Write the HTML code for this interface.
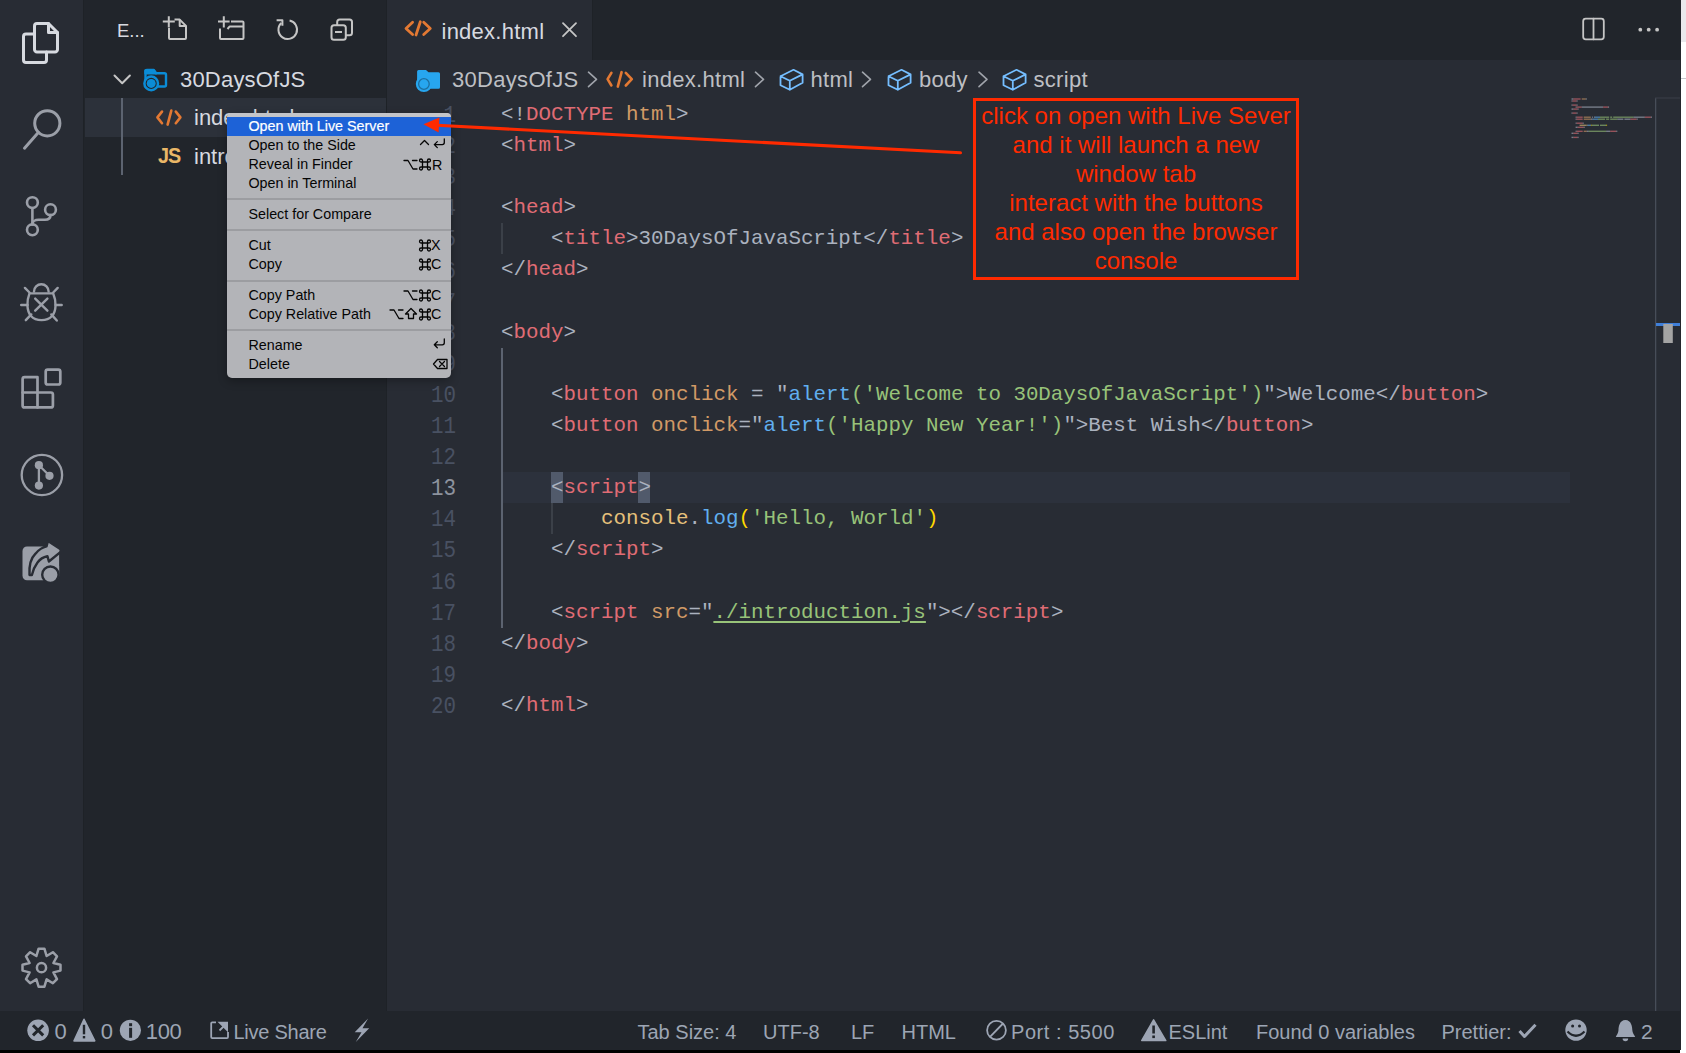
<!DOCTYPE html>
<html><head><meta charset="utf-8">
<style>
*{margin:0;padding:0;box-sizing:border-box}
html,body{width:1686px;height:1053px;overflow:hidden;background:#282c34;font-family:"Liberation Sans",sans-serif}
.a{position:absolute}
#act{left:0;top:0;width:83px;height:1011px;background:#282c34}
#side{left:83px;top:0;width:304px;height:1011px;background:#21252b;border-left:1px solid #1e2227;border-right:1px solid #1e2227}
#tabs{left:387px;top:0;width:1293px;height:60px;background:#21252b}
#tab{left:387px;top:0;width:206px;height:60px;background:#282c34;border-right:1px solid #1e2227}
#editor{left:387px;top:60px;width:1293px;height:951px;background:#282c34}
#status{left:0;top:1011px;width:1680px;height:39px;background:#21252b}
#black{left:0;top:1050px;width:1680px;height:3px;background:#000}
#rstrip{left:1680px;top:0;width:6px;height:1053px;background:#fff}
.code{font-family:"Liberation Mono",monospace;font-size:20.83px;line-height:31.1px;white-space:pre;color:#abb2bf}
.ln{left:400px;width:56px;text-align:right;color:#495162}
.t{color:#e06c75}.o{color:#d19a66}.s{color:#98c379}.f{color:#61afef}.y{color:#e5c07b}.g{color:#ffd700}
.sb{color:#9da5b4;font-size:20px;top:1019.5px;line-height:24px;white-space:pre}
#curline{left:503px;top:472.2px;width:1067px;height:31.1px;background:#2c313c}
.guide{width:2px}
.cur{color:#abb2bf}
.bm{}
.lnn{left:396px;width:60px;text-align:right;transform:scaleY(1.15);transform-origin:50% 68%}
.u{text-decoration:underline;text-decoration-thickness:2px;text-underline-offset:3px}
.sl{white-space:pre;line-height:26px}
.mi{left:248.5px;font-size:14.3px;line-height:20px;white-space:pre}
.sep{left:227px;width:224px;height:2px;background:#9c9da1}
.bc{font-size:22px;color:#bdbfc3;letter-spacing:0.3px}
</style></head><body>
<div id="act" class="a"></div>
<div id="side" class="a"></div>

<svg class="a" style="left:0;top:0" width="84" height="1011" viewBox="0 0 84 1011" fill="none" stroke="#9b9fa8" stroke-width="2.6" stroke-linejoin="round" stroke-linecap="round">
 <g stroke="#d7dae0" stroke-width="3">
  <path d="M34.5 33.5 V26 a2.5 2.5 0 0 1 2.5-2.5 H48.5 L57.5 32.5 V49.5 a2.5 2.5 0 0 1-2.5 2.5 H37 a2.5 2.5 0 0 1-2.5-2.5 Z"/>
  <path d="M48.5 23.5 V32.5 H57.5"/>
  <path d="M34.5 34 H26 a2.5 2.5 0 0 0-2.5 2.5 V60 a2.5 2.5 0 0 0 2.5 2.5 H44 a2.5 2.5 0 0 0 2.5-2.5 V52"/>
 </g>
 <g stroke-width="3">
  <circle cx="47.3" cy="123.3" r="12.6"/>
  <path d="M38.3 132.5 L24.5 148.2"/>
 </g>
 <g stroke-width="2.6">
  <circle cx="32.4" cy="202.6" r="5.4"/>
  <circle cx="50.5" cy="209.7" r="5.4"/>
  <circle cx="32.4" cy="229.8" r="5.4"/>
  <path d="M32.4 208 V224.4"/>
  <path d="M50.5 215.1 C50.5 218.5 48.5 219.8 45 219.8 H38.5 C35 219.8 32.4 221.5 32.4 224"/>
 </g>
 <g stroke-width="2.4">
  <path d="M34 291.5 a7.3 7.3 0 0 1 14.6 0"/>
  <path d="M29.5 293.4 H53.2 C56.5 301 56.5 311 52 316 C47 321.5 36 321.5 31 316 C26.5 311 26.5 301 29.5 293.4 Z"/>
  <path d="M24.9 287.9 L29.5 292.5 M57.7 287.9 L53.2 292.5 M21.2 305 H27.6 M55.6 305 H61.7 M25.8 320.2 L31.3 314.4 M56.8 320.5 L51.3 314.4"/>
  <path d="M35.2 298.6 L47.4 310.7 M47.4 298.6 L35.2 310.7"/>
 </g>
 <g stroke-width="2.7">
  <path d="M24.6 377.2 H37.5 V407.4 H24.6 a2 2 0 0 1-2-2 V379.2 a2 2 0 0 1 2-2 Z"/>
  <path d="M22.6 392.5 H50.9 a2 2 0 0 1 2 2 V405.4 a2 2 0 0 1-2 2 H37.5"/>
  <rect x="45.7" y="369.6" width="14.6" height="14.9" rx="2"/>
 </g>
 <g stroke-width="2.3">
  <circle cx="41.9" cy="475" r="20.2"/>
  <path d="M38.9 465.2 V485.6 M38.9 465.2 L49.5 475.8"/>
 </g>
 <g fill="#9b9fa8" stroke="none">
  <circle cx="38.9" cy="465.2" r="4.1"/><circle cx="49.5" cy="475.8" r="4.1"/><circle cx="38.9" cy="485.6" r="4.1"/>
  <rect x="22.5" y="546.4" width="36.7" height="33.8" rx="4.5"/>
 </g>
 <path fill="#9b9fa8" stroke="#282c34" stroke-width="2.4" d="M29.5 575 C29 567 30 559 35.5 553.7 C39 549.5 42.5 547.3 46.5 546.4 L48 541 L62.5 550.4 L48.9 561.5 L47.4 556.2 C43 557 40 559 37.5 562.5 C34.5 566.5 33 570.5 31.9 575 Z"/>
 <circle cx="50.4" cy="574.7" r="8.2" fill="#9b9fa8" stroke="#282c34" stroke-width="2.4"/>
 <rect x="59.5" y="546" width="4" height="20" fill="#282c34" stroke="none"/>
 <g stroke-width="2.5">
  <path d="M36.4 956.0 L38.6 948.7 L44.4 948.7 L46.6 956.0 L52.9 952.2 L57.0 956.3 L53.4 963.0 L60.5 964.8 L60.5 970.6 L53.4 972.4 L57.0 979.1 L52.9 983.2 L46.6 979.4 L44.4 986.7 L38.6 986.7 L36.4 979.4 L30.1 983.2 L26.0 979.1 L29.6 972.4 L22.5 970.6 L22.5 964.8 L29.6 963.0 L26.0 956.3 L30.1 952.2 Z"/>
  <circle cx="41.5" cy="967.7" r="4.6"/>
 </g>
</svg>

<div class="a" style="left:85px;top:98px;width:301px;height:39px;background:#2c313a"></div>
<div class="a" style="left:121px;top:98px;width:2px;height:77px;background:#5c6370"></div>
<div class="a sl" style="left:117px;top:18px;font-size:18.5px;color:#d7dae0">E...</div>
<svg class="a" style="left:84px;top:0" width="303" height="180" viewBox="84 0 303 180" fill="none" stroke="#c5c5c5" stroke-width="2" stroke-linejoin="round">
 <path d="M162.8 21.6 H174.8 M168.8 16.3 V27.4"/>
 <path d="M174.5 19.6 H179.7 L186 25.9 V38 a1 1 0 0 1-1 1 H170 a1 1 0 0 1-1-1 V28"/>
 <path d="M179.7 19.6 V25.9 H186"/>
 <path d="M218 21.6 H229.6 M223.8 16.3 V27.4"/>
 <path d="M231 21.6 H242.5 a1 1 0 0 1 1 1 V38 a1 1 0 0 1-1 1 H221 a1 1 0 0 1-1-1 V28.5"/>
 <path d="M227.5 29 L229.5 26.6 H243.5"/>
 <path d="M289.6 20.6 A9.3 9.3 0 1 1 281.3 23"/>
 <path d="M276.6 20.2 H282.4 V25.8"/>
 <rect x="337.2" y="19.6" width="14.8" height="15.6" rx="2.5"/>
 <rect x="331.5" y="25.3" width="14.3" height="14.5" rx="2.5" fill="#21252b"/>
 <path d="M335 32 H342"/>
 <path d="M114.5 75.5 L122.2 83.2 L129.9 75.5" stroke-width="2" stroke-linecap="round"/>
 <g stroke="#0b8cd6" stroke-width="2.4">
  <path d="M145.5 80 V71.5 a1.5 1.5 0 0 1 1.5-1.5 H153.8 L156 73.2 H164.5 a1.5 1.5 0 0 1 1.5 1.5 V85 a1.5 1.5 0 0 1-1.5 1.5 H158"/>
  <path d="M145.5 70.5 H153.8 L156 73.2 H145.5 Z" fill="#0b8cd6"/>
  <circle cx="151.2" cy="83.4" r="6.8" stroke-width="2.5"/>
  <circle cx="151.2" cy="83.4" r="4.5" fill="#0b8cd6" stroke="none"/>
 </g>
 <g stroke="#e37933" stroke-width="2.6" stroke-linecap="round">
  <path d="M162 111.6 L157.4 117.4 L162 123.2"/>
  <path d="M171.3 110.6 L167.6 124.6"/>
  <path d="M175.8 111.6 L180.4 117.4 L175.8 123.2"/>
 </g>
</svg>
<div class="a sl" style="left:158px;top:143.3px;font-size:22px;font-weight:700;color:#eab767;letter-spacing:-1px;transform:scaleX(0.9);transform-origin:0 0">JS</div>
<div class="a sl" style="left:180px;top:67px;font-size:22px;color:#d7dae0;letter-spacing:0.2px">30DaysOfJS</div>
<div class="a sl" style="left:194px;top:104.6px;font-size:22px;color:#d7dae0">index.html</div>
<div class="a sl" style="left:194px;top:143.6px;font-size:22px;color:#d7dae0">introduction.js</div>
<div id="tabs" class="a"></div>
<div id="tab" class="a"></div>
<svg class="a" style="left:387px;top:0" width="1293" height="100" viewBox="387 0 1293 100" fill="none" stroke-linejoin="round" stroke-linecap="round">
 <g stroke="#e37933" stroke-width="2.8">
  <path d="M412.6 22.2 L406 28.4 L412.6 34.6"/><path d="M420.3 21.8 L416 35"/><path d="M423.7 22.2 L430.3 28.4 L423.7 34.6"/>
 </g>
 <path d="M563 23.2 L576 36.2 M576 23.2 L563 36.2" stroke="#c5c5c5" stroke-width="1.8"/>
 <rect x="1583.2" y="18.7" width="20.6" height="20.6" rx="2.5" stroke="#c5c5c5" stroke-width="1.8"/>
 <path d="M1593.5 18.7 V39.3" stroke="#c5c5c5" stroke-width="1.8"/>
 <g fill="#c5c5c5" stroke="none"><circle cx="1640.3" cy="29.7" r="1.9"/><circle cx="1648.7" cy="29.7" r="1.9"/><circle cx="1657.1" cy="29.7" r="1.9"/></g>
 <g fill="#27a6ef" stroke="none">
  <path d="M417.1 71.4 a1.5 1.5 0 0 1 1.5-1.5 H426 L428.5 72.3 H438.5 a1.5 1.5 0 0 1 1.5 1.5 V87.3 a1.5 1.5 0 0 1-1.5 1.5 H418.6 a1.5 1.5 0 0 1-1.5-1.5 Z"/>
  <circle cx="423.9" cy="84" r="8.1"/>
 </g>
 <circle cx="423.9" cy="84" r="5.3" stroke="#1d6fa0" stroke-width="1.3"/>
 <g stroke="#a0a4ab" stroke-width="1.6">
  <path d="M588.5 72.2 L596.5 79.4 L588.5 86.6"/>
  <path d="M755.5 72.2 L763.5 79.4 L755.5 86.6"/>
  <path d="M862.5 72.2 L870.5 79.4 L862.5 86.6"/>
  <path d="M979 72.2 L987 79.4 L979 86.6"/>
 </g>
 <g stroke="#e37933" stroke-width="2.6">
  <path d="M611.4 72.9 L607.6 79.2 L611.4 85.5"/><path d="M621.6 72.2 L617.8 86.6"/><path d="M625.8 72.9 L631.8 79.2 L625.8 85.5"/>
 </g>
 <g stroke="#75beff" stroke-width="1.8">
  <path id="cube" d="M793.5 69.8 L802.6 74.4 V82.8 L789.8 89.8 L780.5 85.2 V76.2 Z M780.5 76.2 L789.8 80.8 L802.6 74.4 M789.8 80.8 V89.8"/>
  <path d="M793.5 69.8 L802.6 74.4 V82.8 L789.8 89.8 L780.5 85.2 V76.2 Z M780.5 76.2 L789.8 80.8 L802.6 74.4 M789.8 80.8 V89.8" transform="translate(108 0)"/>
  <path d="M793.5 69.8 L802.6 74.4 V82.8 L789.8 89.8 L780.5 85.2 V76.2 Z M780.5 76.2 L789.8 80.8 L802.6 74.4 M789.8 80.8 V89.8" transform="translate(223 0)"/>
 </g>
</svg>
<div class="a sl" style="left:441.5px;top:19px;font-size:22px;color:#d7dae0;letter-spacing:0.25px">index.html</div>
<div class="a sl bc" style="left:452px;top:67px">30DaysOfJS</div>
<div class="a sl bc" style="left:642px;top:67px">index.html</div>
<div class="a sl bc" style="left:810.5px;top:67px">html</div>
<div class="a sl bc" style="left:919px;top:67px">body</div>
<div class="a sl bc" style="left:1033.5px;top:67px">script</div>


<div id="curline" class="a"></div>
<div class="a guide" style="left:501px;top:223.4px;height:31.1px;background:#3b4048"></div>
<div class="a guide" style="left:501px;top:347.8px;height:279.9px;background:#5c6370"></div>
<div class="a guide" style="left:551px;top:503.3px;height:31.1px;background:#3b4048"></div>
<div class="a" style="left:550.9px;top:472.2px;width:12.2px;height:31.1px;background:#515a6b"></div>
<div class="a" style="left:637.8px;top:472.2px;width:12.6px;height:31.1px;background:#515a6b"></div>
<div class="a code lnn" style="top:101.0px;color:#495162">1</div>
<div class="a code lnn" style="top:132.1px;color:#495162">2</div>
<div class="a code lnn" style="top:163.2px;color:#495162">3</div>
<div class="a code lnn" style="top:194.3px;color:#495162">4</div>
<div class="a code lnn" style="top:225.4px;color:#495162">5</div>
<div class="a code lnn" style="top:256.5px;color:#495162">6</div>
<div class="a code lnn" style="top:287.6px;color:#495162">7</div>
<div class="a code lnn" style="top:318.7px;color:#495162">8</div>
<div class="a code lnn" style="top:349.8px;color:#495162">9</div>
<div class="a code lnn" style="top:380.9px;color:#495162">10</div>
<div class="a code lnn" style="top:412.0px;color:#495162">11</div>
<div class="a code lnn" style="top:443.1px;color:#495162">12</div>
<div class="a code lnn" style="top:474.2px;color:#8d939e">13</div>
<div class="a code lnn" style="top:505.3px;color:#495162">14</div>
<div class="a code lnn" style="top:536.4px;color:#495162">15</div>
<div class="a code lnn" style="top:567.5px;color:#495162">16</div>
<div class="a code lnn" style="top:598.6px;color:#495162">17</div>
<div class="a code lnn" style="top:629.7px;color:#495162">18</div>
<div class="a code lnn" style="top:660.8px;color:#495162">19</div>
<div class="a code lnn" style="top:691.9px;color:#495162">20</div>

<div class="a code" style="left:500.9px;top:99px">&lt;!<span class="t">DOCTYPE</span> <span class="o">html</span>&gt;
&lt;<span class="t">html</span>&gt;

&lt;<span class="t">head</span>&gt;
    &lt;<span class="t">title</span>&gt;30DaysOfJavaScript&lt;/<span class="t">title</span>&gt;
&lt;/<span class="t">head</span>&gt;

&lt;<span class="t">body</span>&gt;

    &lt;<span class="t">button</span> <span class="o">onclick</span> = "<span class="f">alert</span><span class="s">('Welcome to 30DaysOfJavaScript')</span>"&gt;Welcome&lt;/<span class="t">button</span>&gt;
    &lt;<span class="t">button</span> <span class="o">onclick</span>="<span class="f">alert</span><span class="s">('Happy New Year!')</span>"&gt;Best Wish&lt;/<span class="t">button</span>&gt;

    <span class="bm">&lt;</span><span class="t">script</span><span class="bm">&gt;</span>
        <span class="y">console</span>.<span class="f">log</span><span class="g">(</span><span class="s">'Hello, World'</span><span class="g">)</span>
    &lt;/<span class="t">script</span>&gt;

    &lt;<span class="t">script</span> <span class="o">src</span>="<span class="s u">./introduction.js</span>"&gt;&lt;/<span class="t">script</span>&gt;
&lt;/<span class="t">body</span>&gt;

&lt;/<span class="t">html</span>&gt;</div>

<div class="a" style="left:227px;top:113px;width:224px;height:264.5px;background:#b3b4b8;border-radius:5px;box-shadow:0 3px 10px rgba(0,0,0,0.3)"></div>
<div class="a" style="left:227px;top:113px;width:224px;height:4.2px;background:#c3c4c8;border-radius:5px 5px 0 0"></div>
<div class="a" style="left:227px;top:117.2px;width:224px;height:18.5px;background:#1d62d7"></div>
<div class="a sep" style="top:198px"></div>
<div class="a sep" style="top:229px"></div>
<div class="a sep" style="top:279.5px"></div>
<div class="a sep" style="top:329px"></div>
<div class="a mi" style="top:116.2px;color:#ffffff;-webkit-text-stroke:0.2px #fff;">Open with Live Server</div>
<div class="a mi" style="top:135.1px;color:#050505;">Open to the Side</div>
<div class="a mi" style="top:154.2px;color:#050505;">Reveal in Finder</div>
<div class="a mi" style="top:173.2px;color:#050505;">Open in Terminal</div>
<div class="a mi" style="top:203.8px;color:#050505;">Select for Compare</div>
<div class="a mi" style="top:234.7px;color:#050505;">Cut</div>
<div class="a mi" style="top:253.8px;color:#050505;">Copy</div>
<div class="a mi" style="top:284.9px;color:#050505;">Copy Path</div>
<div class="a mi" style="top:303.7px;color:#050505;">Copy Relative Path</div>
<div class="a mi" style="top:334.9px;color:#050505;">Rename</div>
<div class="a mi" style="top:353.7px;color:#050505;">Delete</div>
<svg class="a" style="left:0;top:0" width="500" height="400" fill="none" stroke="#050505" stroke-width="1.3" stroke-linejoin="round" stroke-linecap="round"><path d="M420.5 144.5 L424.5 140.5 L428.5 144.5"/><path d="M444.3 138.8 V142.6 a2 2 0 0 1 -2 2 H434.3 M437.3 141.6 L434.3 144.6 L437.3 147.6"/><path d="M404 160.5 H408 L413 169.0 H417 M412.5 160.5 H417"/><path d="M422.5 162 H427.5 V167 H422.5 Z M422.5 162 V160.5 a1.5 1.5 0 1 0 -1.5 1.5 Z M427.5 162 V160.5 a1.5 1.5 0 1 1 1.5 1.5 Z M422.5 167 V168.5 a1.5 1.5 0 1 1 -1.5 -1.5 Z M427.5 167 V168.5 a1.5 1.5 0 1 0 1.5 -1.5 Z"/><path d="M422.5 243 H427.5 V248 H422.5 Z M422.5 243 V241.5 a1.5 1.5 0 1 0 -1.5 1.5 Z M427.5 243 V241.5 a1.5 1.5 0 1 1 1.5 1.5 Z M422.5 248 V249.5 a1.5 1.5 0 1 1 -1.5 -1.5 Z M427.5 248 V249.5 a1.5 1.5 0 1 0 1.5 -1.5 Z"/><path d="M422.5 262 H427.5 V267 H422.5 Z M422.5 262 V260.5 a1.5 1.5 0 1 0 -1.5 1.5 Z M427.5 262 V260.5 a1.5 1.5 0 1 1 1.5 1.5 Z M422.5 267 V268.5 a1.5 1.5 0 1 1 -1.5 -1.5 Z M427.5 267 V268.5 a1.5 1.5 0 1 0 1.5 -1.5 Z"/><path d="M404 291 H408 L413 299.5 H417 M412.5 291 H417"/><path d="M422.5 293 H427.5 V298 H422.5 Z M422.5 293 V291.5 a1.5 1.5 0 1 0 -1.5 1.5 Z M427.5 293 V291.5 a1.5 1.5 0 1 1 1.5 1.5 Z M422.5 298 V299.5 a1.5 1.5 0 1 1 -1.5 -1.5 Z M427.5 298 V299.5 a1.5 1.5 0 1 0 1.5 -1.5 Z"/><path d="M390 310 H394 L399 318.5 H403 M398.5 310 H403"/><path d="M411.0 308.5 L416.5 314.0 H413.5 V318.5 H408.5 V314.0 H405.5 Z"/><path d="M422.5 312 H427.5 V317 H422.5 Z M422.5 312 V310.5 a1.5 1.5 0 1 0 -1.5 1.5 Z M427.5 312 V310.5 a1.5 1.5 0 1 1 1.5 1.5 Z M422.5 317 V318.5 a1.5 1.5 0 1 1 -1.5 -1.5 Z M427.5 317 V318.5 a1.5 1.5 0 1 0 1.5 -1.5 Z"/><path d="M444.3 339 V342.8 a2 2 0 0 1 -2 2 H434.3 M437.3 341.8 L434.3 344.8 L437.3 347.8"/><path d="M437.5 359.5 H447 V368.5 H437.5 L433.5 364 Z M439.5 361.5 L444.5 366.5 M444.5 361.5 L439.5 366.5"/></svg>
<div class="a mi" style="top:154.6px;left:432px;color:#050505">R</div>
<div class="a mi" style="top:235.1px;left:431px;color:#050505">X</div>
<div class="a mi" style="top:254.2px;left:431px;color:#050505">C</div>
<div class="a mi" style="top:285.3px;left:431px;color:#050505">C</div>
<div class="a mi" style="top:304.1px;left:431px;color:#050505">C</div>

<div class="a" style="left:972.7px;top:97.5px;width:326.6px;height:182.5px;border:3.2px solid #ff2a00"></div>
<div class="a" style="left:975px;top:101px;width:322px;text-align:center;font-size:24px;line-height:29px;color:#ff2a00;white-space:pre">click on open with Live Sever
and it will launch a new
window tab
interact with the buttons
and also open the browser
console</div>
<svg class="a" style="left:0;top:0" width="1686" height="300" viewBox="0 0 1686 300">
 <path d="M437 125.3 L960.5 152.8" stroke="#ff2a00" stroke-width="3.1" stroke-linecap="round"/>
 <path d="M423.5 124.2 L439.4 117.6 L438.6 132.4 Z" fill="#ff2a00"/>
</svg>
<svg class="a" style="left:0;top:0" width="1686" height="1011" viewBox="0 0 1686 1011"><rect x="1571.5" y="98.3" width="2.0" height="1.4" fill="#abb2bf" opacity="0.6"/><rect x="1573.5" y="98.3" width="7.1" height="1.4" fill="#e06c75" opacity="0.6"/><rect x="1581.7" y="98.3" width="4.1" height="1.4" fill="#d19a66" opacity="0.6"/><rect x="1585.8" y="98.3" width="1.0" height="1.4" fill="#abb2bf" opacity="0.6"/><rect x="1571.5" y="100.3" width="1.0" height="1.4" fill="#abb2bf" opacity="0.6"/><rect x="1572.5" y="100.3" width="4.1" height="1.4" fill="#e06c75" opacity="0.6"/><rect x="1576.6" y="100.3" width="1.0" height="1.4" fill="#abb2bf" opacity="0.6"/><rect x="1571.5" y="104.4" width="1.0" height="1.4" fill="#abb2bf" opacity="0.6"/><rect x="1572.5" y="104.4" width="4.1" height="1.4" fill="#e06c75" opacity="0.6"/><rect x="1576.6" y="104.4" width="1.0" height="1.4" fill="#abb2bf" opacity="0.6"/><rect x="1575.6" y="106.4" width="1.0" height="1.4" fill="#abb2bf" opacity="0.6"/><rect x="1576.6" y="106.4" width="5.1" height="1.4" fill="#e06c75" opacity="0.6"/><rect x="1581.7" y="106.4" width="21.4" height="1.4" fill="#abb2bf" opacity="0.6"/><rect x="1603.1" y="106.4" width="5.1" height="1.4" fill="#e06c75" opacity="0.6"/><rect x="1608.1" y="106.4" width="1.0" height="1.4" fill="#abb2bf" opacity="0.6"/><rect x="1571.5" y="108.4" width="2.0" height="1.4" fill="#abb2bf" opacity="0.6"/><rect x="1573.5" y="108.4" width="4.1" height="1.4" fill="#e06c75" opacity="0.6"/><rect x="1577.6" y="108.4" width="1.0" height="1.4" fill="#abb2bf" opacity="0.6"/><rect x="1571.5" y="112.4" width="1.0" height="1.4" fill="#abb2bf" opacity="0.6"/><rect x="1572.5" y="112.4" width="4.1" height="1.4" fill="#e06c75" opacity="0.6"/><rect x="1576.6" y="112.4" width="1.0" height="1.4" fill="#abb2bf" opacity="0.6"/><rect x="1575.6" y="116.5" width="1.0" height="1.4" fill="#abb2bf" opacity="0.6"/><rect x="1576.6" y="116.5" width="6.1" height="1.4" fill="#e06c75" opacity="0.6"/><rect x="1583.7" y="116.5" width="7.1" height="1.4" fill="#d19a66" opacity="0.6"/><rect x="1591.9" y="116.5" width="1.0" height="1.4" fill="#abb2bf" opacity="0.6"/><rect x="1593.9" y="116.5" width="1.0" height="1.4" fill="#abb2bf" opacity="0.6"/><rect x="1594.9" y="116.5" width="5.1" height="1.4" fill="#61afef" opacity="0.6"/><rect x="1600.0" y="116.5" width="9.2" height="1.4" fill="#98c379" opacity="0.6"/><rect x="1610.2" y="116.5" width="2.0" height="1.4" fill="#98c379" opacity="0.6"/><rect x="1613.2" y="116.5" width="20.4" height="1.4" fill="#98c379" opacity="0.6"/><rect x="1633.6" y="116.5" width="11.2" height="1.4" fill="#abb2bf" opacity="0.6"/><rect x="1644.8" y="116.5" width="6.1" height="1.4" fill="#e06c75" opacity="0.6"/><rect x="1650.9" y="116.5" width="1.0" height="1.4" fill="#abb2bf" opacity="0.6"/><rect x="1575.6" y="118.5" width="1.0" height="1.4" fill="#abb2bf" opacity="0.6"/><rect x="1576.6" y="118.5" width="6.1" height="1.4" fill="#e06c75" opacity="0.6"/><rect x="1583.7" y="118.5" width="7.1" height="1.4" fill="#d19a66" opacity="0.6"/><rect x="1590.8" y="118.5" width="2.0" height="1.4" fill="#abb2bf" opacity="0.6"/><rect x="1592.9" y="118.5" width="5.1" height="1.4" fill="#61afef" opacity="0.6"/><rect x="1598.0" y="118.5" width="7.1" height="1.4" fill="#98c379" opacity="0.6"/><rect x="1606.1" y="118.5" width="3.1" height="1.4" fill="#98c379" opacity="0.6"/><rect x="1610.2" y="118.5" width="7.1" height="1.4" fill="#98c379" opacity="0.6"/><rect x="1617.3" y="118.5" width="6.1" height="1.4" fill="#abb2bf" opacity="0.6"/><rect x="1624.4" y="118.5" width="6.1" height="1.4" fill="#abb2bf" opacity="0.6"/><rect x="1630.5" y="118.5" width="6.1" height="1.4" fill="#e06c75" opacity="0.6"/><rect x="1636.7" y="118.5" width="1.0" height="1.4" fill="#abb2bf" opacity="0.6"/><rect x="1575.6" y="122.5" width="1.0" height="1.4" fill="#abb2bf" opacity="0.6"/><rect x="1576.6" y="122.5" width="6.1" height="1.4" fill="#e06c75" opacity="0.6"/><rect x="1582.7" y="122.5" width="1.0" height="1.4" fill="#abb2bf" opacity="0.6"/><rect x="1579.6" y="124.6" width="7.1" height="1.4" fill="#e5c07b" opacity="0.6"/><rect x="1586.8" y="124.6" width="1.0" height="1.4" fill="#abb2bf" opacity="0.6"/><rect x="1587.8" y="124.6" width="3.1" height="1.4" fill="#61afef" opacity="0.6"/><rect x="1590.8" y="124.6" width="1.0" height="1.4" fill="#ffd700" opacity="0.6"/><rect x="1591.9" y="124.6" width="7.1" height="1.4" fill="#98c379" opacity="0.6"/><rect x="1600.0" y="124.6" width="6.1" height="1.4" fill="#98c379" opacity="0.6"/><rect x="1606.1" y="124.6" width="1.0" height="1.4" fill="#ffd700" opacity="0.6"/><rect x="1575.6" y="126.6" width="2.0" height="1.4" fill="#abb2bf" opacity="0.6"/><rect x="1577.6" y="126.6" width="6.1" height="1.4" fill="#e06c75" opacity="0.6"/><rect x="1583.7" y="126.6" width="1.0" height="1.4" fill="#abb2bf" opacity="0.6"/><rect x="1575.6" y="130.6" width="1.0" height="1.4" fill="#abb2bf" opacity="0.6"/><rect x="1576.6" y="130.6" width="6.1" height="1.4" fill="#e06c75" opacity="0.6"/><rect x="1583.7" y="130.6" width="3.1" height="1.4" fill="#d19a66" opacity="0.6"/><rect x="1586.8" y="130.6" width="2.0" height="1.4" fill="#abb2bf" opacity="0.6"/><rect x="1588.8" y="130.6" width="17.3" height="1.4" fill="#98c379" opacity="0.6"/><rect x="1606.1" y="130.6" width="4.1" height="1.4" fill="#abb2bf" opacity="0.6"/><rect x="1610.2" y="130.6" width="6.1" height="1.4" fill="#e06c75" opacity="0.6"/><rect x="1616.3" y="130.6" width="1.0" height="1.4" fill="#abb2bf" opacity="0.6"/><rect x="1571.5" y="132.6" width="2.0" height="1.4" fill="#abb2bf" opacity="0.6"/><rect x="1573.5" y="132.6" width="4.1" height="1.4" fill="#e06c75" opacity="0.6"/><rect x="1577.6" y="132.6" width="1.0" height="1.4" fill="#abb2bf" opacity="0.6"/><rect x="1571.5" y="136.7" width="2.0" height="1.4" fill="#abb2bf" opacity="0.6"/><rect x="1573.5" y="136.7" width="4.1" height="1.4" fill="#e06c75" opacity="0.6"/><rect x="1577.6" y="136.7" width="1.0" height="1.4" fill="#abb2bf" opacity="0.6"/>
 <rect x="1655" y="98" width="1.3" height="913" fill="#474d58"/>
 <rect x="1655" y="97.5" width="25" height="1" fill="#3a3f48"/>
 <rect x="1656" y="323" width="24" height="3" fill="#3f7fd9"/>
 <rect x="1663.3" y="324" width="9.5" height="19" fill="#a4a4a4"/>
</svg>
<div id="status" class="a"></div>

<svg class="a" style="left:0;top:1011px" width="1680" height="39" viewBox="0 1011 1680 39">
 <g fill="#9da5b4">
  <circle cx="38.1" cy="1030.3" r="10.8"/>
  <path d="M84 1019.3 L94.8 1040.9 H74 Z" stroke="#9da5b4" stroke-width="1.5" stroke-linejoin="round"/>
  <circle cx="130.4" cy="1030.3" r="10.6"/>
  <path d="M1153.6 1019.9 L1165.8 1040.6 H1141.7 Z" stroke="#9da5b4" stroke-width="1.5" stroke-linejoin="round"/>
  <circle cx="1576" cy="1030.1" r="10.7"/>
  <path d="M1625.4 1020 C1619.5 1020 1618.5 1027 1618.5 1030 C1618.5 1033 1616.5 1035 1615.8 1037.1 H1635.2 C1634.5 1035 1632.3 1033 1632.3 1030 C1632.3 1027 1631.3 1020 1625.4 1020 Z"/>
  <path d="M1622.6 1038.5 a2.8 2.8 0 0 0 5.6 0 Z"/>
  <path d="M368.1 1018.4 L354.7 1032.3 H361.5 L355.8 1041.9 L369.2 1028.3 H362.5 Z"/>
  <path d="M217.5 1021.8 H228 V1032.3 Z"/>
 </g>
 <g stroke="#21252b" stroke-width="3">
  <path d="M33 1025.2 L43.2 1035.4 M43.2 1025.2 L33 1035.4"/>
 </g>
 <g fill="#21252b">
  <rect x="82.8" y="1024.8" width="2.4" height="9.5"/><rect x="82.8" y="1036" width="2.4" height="2.4"/>
  <rect x="129.1" y="1023.2" width="3" height="3"/><rect x="129.1" y="1027.8" width="3" height="10"/>
  <rect x="1152.3" y="1025.5" width="2.6" height="8"/><rect x="1152.3" y="1035.5" width="2.6" height="2.6"/>
  <circle cx="1572.6" cy="1025.9" r="1.5"/><circle cx="1579.5" cy="1025.9" r="1.5"/>
 </g>
 <path d="M1567.5 1031.5 Q1576 1040 1584.5 1031.5" stroke="#21252b" stroke-width="2.2" fill="none"/>
 <g stroke="#9da5b4" fill="none" stroke-width="1.8">
  <path d="M216 1022.3 H212.2 a1 1 0 0 0-1 1 V1037.1 a1 1 0 0 0 1 1 H227 a1 1 0 0 0 1-1 V1032"/>
  <path d="M219.5 1030.5 L226 1024"/>
  <circle cx="996.5" cy="1030.2" r="9.4"/>
  <path d="M1003 1023.5 L990 1036.9"/>
  <path d="M1519.5 1031 L1524.5 1036.5 L1535.5 1024.8" stroke-width="3" stroke-linejoin="round"/>
 </g>
</svg>
<div class="a sb" style="left:54.5px;font-size:22px;top:1019.6px">0</div>
<div class="a sb" style="left:100.8px;font-size:22px;top:1019.6px">0</div>
<div class="a sb" style="left:145.8px;font-size:22px;top:1019.6px;letter-spacing:-0.4px">100</div>
<div class="a sb" style="left:233.5px;letter-spacing:-0.25px">Live Share</div>
<div class="a sb" style="left:637.5px">Tab Size: 4</div>
<div class="a sb" style="left:763px">UTF-8</div>
<div class="a sb" style="left:851px">LF</div>
<div class="a sb" style="left:901.5px">HTML</div>
<div class="a sb" style="left:1011px;letter-spacing:0.55px">Port : 5500</div>
<div class="a sb" style="left:1168.5px">ESLint</div>
<div class="a sb" style="left:1256px">Found 0 variables</div>
<div class="a sb" style="left:1441.5px">Prettier:</div>
<div class="a sb" style="left:1641px;font-size:21px;top:1019.8px">2</div>
<div id="black" class="a"></div>
<div id="rstrip" class="a"></div>
<div class="a" style="left:1680px;top:0;width:6px;height:41.5px;background:#e9e9ec"></div>
<div class="a" style="left:1680px;top:78px;width:6px;height:1.3px;background:#c8c8cc"></div>
<div class="a" style="left:1679.5px;top:0;width:1px;height:1050px;background:#23262c"></div>
</body></html>
